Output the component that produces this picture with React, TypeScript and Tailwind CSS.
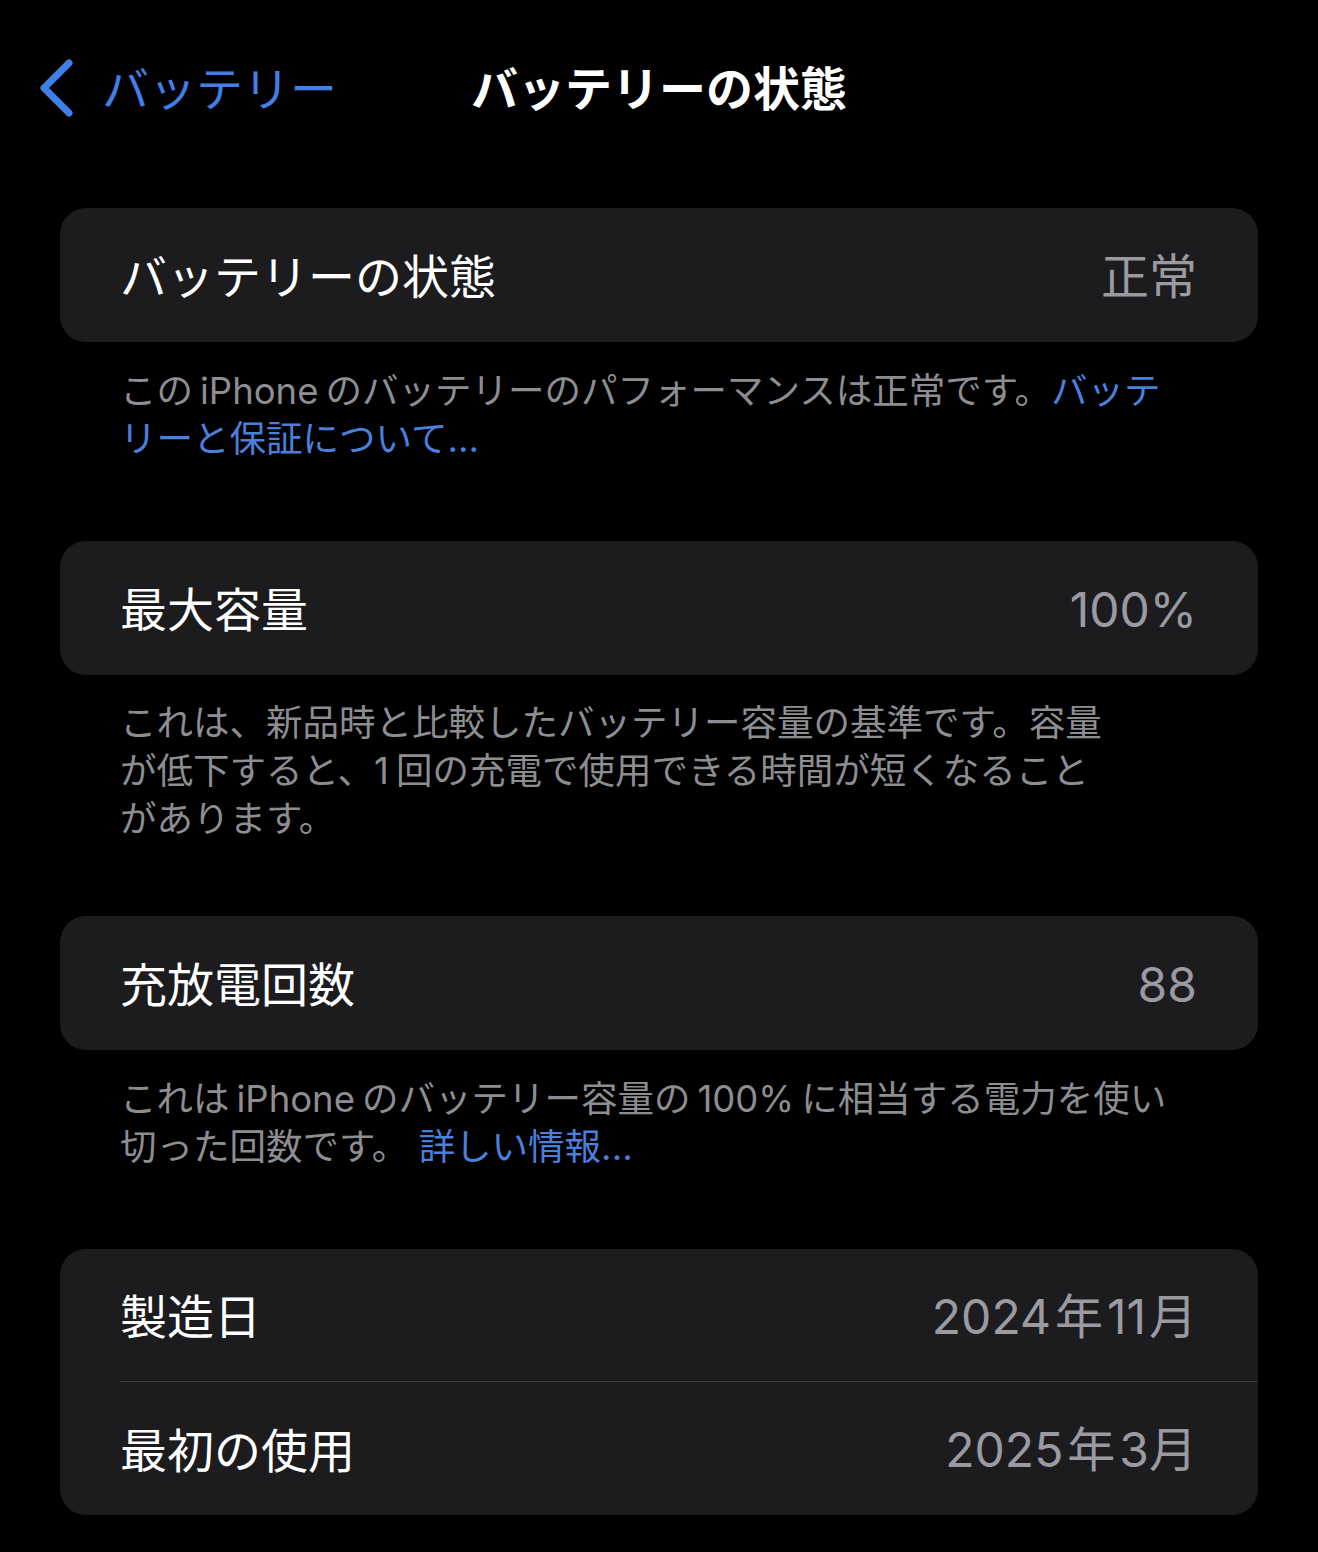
import React from 'react';

const font = { fontFamily: 'Inter, "Noto Sans CJK JP", sans-serif' };

// Narrow gap iOS puts between Latin and Japanese text
const G = ({ w = 'w-[7px]' }: { w?: string }) => <span className={`inline-block ${w}`} />;

// Single row inside a grouped card
const Row = ({ label, value, h = 'h-[134px]' }: { label: string; value: React.ReactNode; h?: string }) => (
  <div className={`${h} flex items-center justify-between pl-[60px] pr-[61px] pt-[3px]`}>
    <span className="text-[47px] leading-none text-white">{label}</span>
    <span className="text-[48px] leading-none text-[#9a9aa0]">{value}</span>
  </div>
);

const Card = ({ children }: { children: React.ReactNode }) => (
  <div className="mx-[60px] rounded-[26px] bg-[#1c1c1e] overflow-hidden">{children}</div>
);

const Note = ({ children, className = '' }: { children: React.ReactNode; className?: string }) => (
  <div className={`pl-[120px] text-[36.5px] leading-[48px] text-[#8d8d92] whitespace-nowrap ${className}`}>
    {children}
  </div>
);

const Link = ({ children }: { children: React.ReactNode }) => (
  <span className="text-[#4a80dc]">{children}</span>
);

const App = () => {
  return (
    <div className="min-h-[1552px] w-[1318px] bg-black pt-[56px] pb-[37px]" style={font}>
      {/* Navigation bar */}
      <div className="h-[64px] grid grid-cols-[1fr_auto_1fr] items-center">
        <div className="flex items-center pl-[38px] gap-[28px] text-[#3f7fe6]">
          <svg width="36" height="58" viewBox="0 0 36 58" fill="none">
            <polyline
              points="31,4 6,29 31,54"
              stroke="#3f7fe6"
              strokeWidth="7"
              strokeLinecap="round"
              strokeLinejoin="round"
            />
          </svg>
          <span className="text-[47px] leading-none">バッテリー</span>
        </div>
        <div className="text-[47px] leading-none font-bold text-white">バッテリーの状態</div>
        <div />
      </div>

      <div className="mt-[88px]">
        <Card>
          <Row label="バッテリーの状態" value="正常" />
        </Card>
        <Note className="mt-[25px]">
          <div>
            この<G />iPhone<G />のバッテリーのパフォーマンスは正常です。<Link>バッテ</Link>
          </div>
          <div>
            <Link>リーと保証について...</Link>
          </div>
        </Note>
      </div>

      <div className="mt-[78px]">
        <Card>
          <Row label="最大容量" value="100%" />
        </Card>
        <Note className="mt-[24px]">
          <div>これは、新品時と比較したバッテリー容量の基準です。容量</div>
          <div>
            が低下すると、1<G />回の充電で使用できる時間が短くなること
          </div>
          <div>があります。</div>
        </Note>
      </div>

      <div className="mt-[73px]">
        <Card>
          <Row label="充放電回数" value="88" />
        </Card>
        <Note className="mt-[25px]">
          <div>
            これは<G />iPhone<G />のバッテリー容量の<G />100%<G />に相当する電力を使い
          </div>
          <div>
            切った回数です。 <Link>詳しい情報...</Link>
          </div>
        </Note>
      </div>

      <div className="mt-[78px]">
        <Card>
          <Row
            label="製造日"
            h="h-[132px]"
            value={
              <>
                2024<G w="w-[4px]" />年<G w="w-[4px]" />11<G w="w-[3px]" />月
              </>
            }
          />
          <div className="ml-[59px] h-px bg-[#3a3a3c]" />
          <Row
            label="最初の使用"
            h="h-[133px]"
            value={
              <>
                2025<G w="w-[4px]" />年<G w="w-[4px]" />3月
              </>
            }
          />
        </Card>
      </div>
    </div>
  );
};

export default App;
